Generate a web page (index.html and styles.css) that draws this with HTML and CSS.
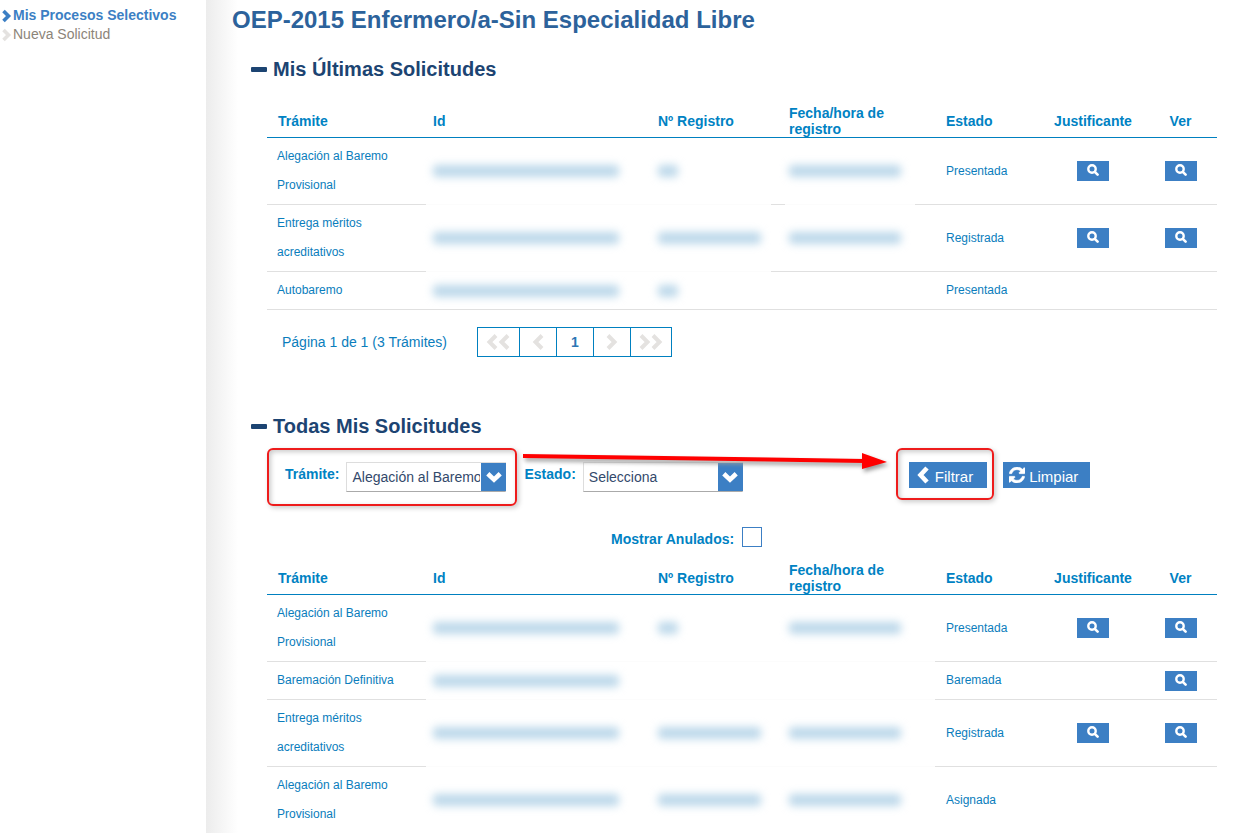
FILE: index.html
```html
<!DOCTYPE html>
<html lang="es">
<head>
<meta charset="utf-8">
<title>Mis Procesos Selectivos</title>
<link rel="stylesheet" href="styles.css">
</head>
<body>
<svg class="sprite" aria-hidden="true">
  <symbol id="chev-right" viewBox="0 0 10 14"><path d="M1.500 2l5 5-5 5" fill="none" stroke="currentColor" stroke-width="3.600"/></symbol>
  <symbol id="chev-left" viewBox="0 0 12 18"><path d="M10 2L3.500 9l6.500 7" fill="none" stroke="currentColor" stroke-width="4.600"/></symbol>
  <symbol id="chev-down" viewBox="0 0 16 12"><path d="M1.800 2.800L8 8.600l6.200-5.800" fill="none" stroke="currentColor" stroke-width="4.600"/></symbol>
  <symbol id="page-prev" viewBox="0 0 12 16"><path d="M10 1.500L3.500 8l6.500 6.500" fill="none" stroke="currentColor" stroke-width="4"/></symbol>
  <symbol id="page-next" viewBox="0 0 12 16"><path d="M2 1.500L8.500 8 2 14.500" fill="none" stroke="currentColor" stroke-width="4"/></symbol>
  <symbol id="lens" viewBox="0 0 12 12"><circle cx="5" cy="5" r="3.700" fill="none" stroke="currentColor" stroke-width="2.400"/><path d="M7.800 7.800l2.800 2.800" stroke="currentColor" stroke-width="2.600" stroke-linecap="round"/></symbol>
  <symbol id="refresh" viewBox="0 0 1536 1536"><path fill="currentColor" stroke="currentColor" stroke-width="50" d="M1511 928q0 5-1 7-64 268-268 434.500T764 1536q-146 0-282.500-55T238 1324l-129 129q-19 19-45 19t-45-19-19-45V960q0-26 19-45t45-19h448q26 0 45 19t19 45-19 45l-137 137q71 66 161 102t187 36q134 0 250-65t186-179q11-17 53-117 8-23 30-23h192q13 0 22.500 9.500T1511 928zm25-800v448q0 26-19 45t-45 19h-448q-26 0-45-19t-19-45 19-45l138-138Q969 256 768 256q-134 0-250 65T332 500q-11 17-53 117-8 23-30 23H50q-13 0-22.500-9.500T18 608v-7q65-268 270-434.500T768 0q146 0 284 55.500T1297 212l130-129q19-19 45-19t45 19 19 45z"/></symbol>
</svg>
<div class="page">
  <nav class="side">
    <a class="side-link active" href="#procesos"><svg class="side-icon"><use href="#chev-right"/></svg>Mis Procesos Selectivos</a>
    <a class="side-link" href="#nueva"><svg class="side-icon"><use href="#chev-right"/></svg>Nueva Solicitud</a>
  </nav>
  <main class="main">
    <h1 class="title">OEP-2015 Enfermero/a-Sin Especialidad Libre</h1>

    <section class="section">
      <h2 class="heading"><span class="minus"></span>Mis Últimas Solicitudes</h2>
      <div class="content">
        <table class="grid partial">
          <colgroup><col class="c-tramite"><col class="c-id"><col class="c-reg"><col class="c-fecha"><col class="c-estado"><col class="c-just"><col class="c-ver"></colgroup>
          <thead><tr><th>Trámite</th><th>Id</th><th>Nº Registro</th><th>Fecha/hora de registro</th><th>Estado</th><th class="mid">Justificante</th><th class="mid">Ver</th></tr></thead>
          <tbody>
            <tr><td>Alegación al Baremo Provisional</td><td class="veil v-id"><span class="smudge w-id"></span></td><td class="veil v-reg"><span class="smudge w-short"></span></td><td class="veil v-fecha"><span class="smudge w-fecha"></span></td><td>Presentada</td><td class="mid"><button class="look" aria-label="Justificante"><svg><use href="#lens"/></svg></button></td><td class="mid"><button class="look" aria-label="Ver"><svg><use href="#lens"/></svg></button></td></tr>
            <tr><td>Entrega méritos acreditativos</td><td class="veil v-id"><span class="smudge w-id"></span></td><td class="veil v-reg"><span class="smudge w-reg"></span></td><td><span class="smudge w-fecha"></span></td><td>Registrada</td><td class="mid"><button class="look" aria-label="Justificante"><svg><use href="#lens"/></svg></button></td><td class="mid"><button class="look" aria-label="Ver"><svg><use href="#lens"/></svg></button></td></tr>
            <tr><td>Autobaremo</td><td><span class="smudge w-id"></span></td><td><span class="smudge w-short"></span></td><td></td><td>Presentada</td><td></td><td></td></tr>
          </tbody>
        </table>
        <div class="pager">
          <span>Página 1 de 1 (3 Trámites)</span>
          <div class="pages">
            <button class="page-btn wide" aria-label="Primera"><svg><use href="#page-prev"/></svg><svg><use href="#page-prev"/></svg></button>
            <button class="page-btn" aria-label="Anterior"><svg><use href="#page-prev"/></svg></button>
            <button class="page-btn current">1</button>
            <button class="page-btn" aria-label="Siguiente"><svg><use href="#page-next"/></svg></button>
            <button class="page-btn wide" aria-label="Última"><svg><use href="#page-next"/></svg><svg><use href="#page-next"/></svg></button>
          </div>
        </div>
      </div>
    </section>

    <section class="section second">
      <h2 class="heading"><span class="minus"></span>Todas Mis Solicitudes</h2>
      <form class="content">
        <div class="filters">
          <div class="field marked mark-field">
            <label for="tramite">Trámite:</label>
            <span class="select"><select id="tramite"><option>Alegación al Baremo Provisional</option></select><span class="select-arrow"><svg><use href="#chev-down"/></svg></span></span>
          </div>
          <div class="field">
            <label for="estado">Estado:</label>
            <span class="select"><select id="estado"><option>Selecciona</option></select><span class="select-arrow"><svg><use href="#chev-down"/></svg></span></span>
          </div>
          <div class="actions">
            <span class="marked mark-btn"><button class="btn btn-filter" type="button"><svg class="i-left"><use href="#chev-left"/></svg>Filtrar</button></span>
            <button class="btn" type="button"><svg class="i-refresh"><use href="#refresh"/></svg>Limpiar</button>
          </div>
          <svg class="arrow" viewBox="0 0 366 24" aria-hidden="true"><path d="M2 7L344 12" stroke="#f00" stroke-width="4"/><path d="M341 4l25 9-25 7z" fill="#f00"/></svg>
        </div>
        <div class="anulados"><label for="anulados">Mostrar Anulados:</label><input id="anulados" type="checkbox"></div>
        <table class="grid">
          <colgroup><col class="c-tramite"><col class="c-id"><col class="c-reg"><col class="c-fecha"><col class="c-estado"><col class="c-just"><col class="c-ver"></colgroup>
          <thead><tr><th>Trámite</th><th>Id</th><th>Nº Registro</th><th>Fecha/hora de registro</th><th>Estado</th><th class="mid">Justificante</th><th class="mid">Ver</th></tr></thead>
          <tbody>
            <tr><td>Alegación al Baremo Provisional</td><td class="veil"><span class="smudge w-id"></span></td><td class="veil"><span class="smudge w-short"></span></td><td class="veil"><span class="smudge w-fecha"></span></td><td>Presentada</td><td class="mid"><button class="look" type="button" aria-label="Justificante"><svg><use href="#lens"/></svg></button></td><td class="mid"><button class="look" type="button" aria-label="Ver"><svg><use href="#lens"/></svg></button></td></tr>
            <tr><td>Baremación Definitiva</td><td class="veil"><span class="smudge w-id"></span></td><td class="veil"></td><td class="veil"></td><td>Baremada</td><td></td><td class="mid"><button class="look" type="button" aria-label="Ver"><svg><use href="#lens"/></svg></button></td></tr>
            <tr><td>Entrega méritos acreditativos</td><td class="veil"><span class="smudge w-id"></span></td><td class="veil"><span class="smudge w-reg"></span></td><td class="veil"><span class="smudge w-fecha"></span></td><td>Registrada</td><td class="mid"><button class="look" type="button" aria-label="Justificante"><svg><use href="#lens"/></svg></button></td><td class="mid"><button class="look" type="button" aria-label="Ver"><svg><use href="#lens"/></svg></button></td></tr>
            <tr><td>Alegación al Baremo Provisional</td><td class="veil"><span class="smudge w-id"></span></td><td class="veil"><span class="smudge w-reg"></span></td><td class="veil"><span class="smudge w-fecha"></span></td><td>Asignada</td><td></td><td></td></tr>
          </tbody>
        </table>
      </form>
    </section>
  </main>
</div>
</body>
</html>
```
FILE: styles.css
```css
* { box-sizing: border-box; }
body {
  margin: 0;
  background: #fff;
  color: #0a7dbc;
  font: 14px/16px "Liberation Sans", Arial, sans-serif;
}
button, select { font-family: inherit; cursor: pointer; }
svg { display: block; }
.sprite { position: absolute; width: 0; height: 0; }

.page { display: flex; min-height: 100vh; }
.side { flex: 0 0 206px; padding: 6px 0 0 2px; }
.side-link {
  display: flex;
  align-items: center;
  gap: 1px;
  line-height: 19px;
  color: #8c8479;
  text-decoration: none;
}
.side-link.active { color: #3c7fc4; font-weight: bold; }
.side-icon { width: 10px; height: 14px; color: #e4e2e0; }
.active .side-icon { color: #3c7fc4; }

.main {
  flex: 1;
  min-width: 0;
  padding: 6px 41px 0 26px;
  background: linear-gradient(to right, #ececec, #fff 32px);
}
.title { margin: 0; color: #2c629b; font-size: 24px; line-height: 28px; }
.section { margin-top: 23px; padding-left: 19px; }
.section.second { margin-top: 57px; }
.heading {
  display: flex;
  align-items: center;
  gap: 6px;
  margin: 0 0 24px;
  color: #1c4472;
  font-size: 20px;
  line-height: 24px;
}
.minus { width: 16px; height: 5px; border-radius: 1px; background: #1c4472; }
.content { padding-left: 16px; }

.grid { width: 100%; table-layout: fixed; border-collapse: separate; border-spacing: 0; }
.c-tramite { width: 155px; }
.c-id { width: 225px; }
.c-reg { width: 131px; }
.c-fecha { width: 157px; }
.c-estado { width: 107px; }
.c-just { width: 102px; }
.c-ver { width: 73px; }
.grid th {
  padding: 0 11px;
  border-bottom: 1px solid #0080c0;
  color: #0082c3;
  text-align: left;
  line-height: 16px;
}
.grid td {
  position: relative;
  padding: 4px 20px 4px 10px;
  border-bottom: 1px solid #e0e0e0;
  font-size: 12px;
  line-height: 29px;
}
.grid td:not(:first-child) { padding-left: 11px; padding-right: 0; }
.grid .mid { padding-left: 0; padding-right: 0; text-align: center; }
.grid td.mid:not(:first-child) { padding-left: 0; }
.veil::after {
  content: "";
  position: absolute;
  left: 0;
  right: -4px;
  bottom: -1px;
  height: 1px;
  background: #fcfcfc;
}
td:nth-child(2).veil::after { left: 4px; }
.v-reg::after { right: 7px; }
.v-fecha::after { left: 7px; right: 20px; }
.smudge {
  display: block;
  height: 12px;
  border-radius: 4px;
  background: #bcd8ea;
  filter: blur(4px);
}
.w-id { width: 186px; }
.w-short { width: 20px; }
.w-reg { width: 103px; }
.w-fecha { width: 112px; }
.look {
  display: flex;
  align-items: center;
  justify-content: center;
  width: 32px;
  height: 20px;
  margin: 0 auto;
  padding: 0 0 2px;
  border: 0;
  background: #3c7fc4;
  color: #fff;
}
.look svg { width: 12px; height: 12px; }

.pager { display: flex; align-items: center; gap: 30px; margin-top: 17px; padding-left: 15px; }
.pages { display: flex; border: 1px solid #0080c0; }
.page-btn {
  display: flex;
  align-items: center;
  justify-content: center;
  width: 37px;
  height: 28px;
  padding: 0;
  border: 0;
  border-left: 1px solid #0080c0;
  background: #fff;
  color: #e4e2e0;
}
.page-btn:first-child { border-left: 0; }
.page-btn.wide { width: 41px; }
.page-btn svg { width: 12px; height: 16px; }
.page-btn.current { color: #2c76b4; font-size: 14px; font-weight: bold; }

.filters { position: relative; display: flex; align-items: flex-start; gap: 18px; padding-left: 18px; }
.field { display: flex; gap: 7px; }
.field label { color: #0082c3; font-weight: bold; line-height: 24px; }
.select { position: relative; display: block; }
.select select {
  width: 160px;
  height: 30px;
  padding: 0 25px 0 5px;
  border: 1px solid #ddd;
  border-bottom-color: #aaa;
  border-radius: 0;
  appearance: none;
  background: #fff;
  color: #33496b;
  font-size: 14px;
  text-overflow: clip;
}
.select-arrow {
  position: absolute;
  top: 1px;
  right: 0;
  display: grid;
  place-items: center;
  width: 25px;
  height: 28px;
  background: #3c7fc4;
  color: #fff;
  pointer-events: none;
}
.select-arrow svg { width: 16px; height: 12px; }
.marked { position: relative; }
.marked::after {
  content: "";
  position: absolute;
  border: 2px solid #ee1c1c;
  border-radius: 6px;
  box-shadow: 2px 2px 5px #ccc, inset 2px 2px 5px #ccc;
  pointer-events: none;
}
.mark-field::after { inset: -14px -11px -14px -18px; }
.mark-btn::after { inset: -14px -7px -12px -13px; }
.actions { display: flex; gap: 16px; margin-left: 148px; }
.btn {
  display: flex;
  align-items: center;
  gap: 4px;
  height: 26px;
  padding: 3px 12px 0 6px;
  border: 0;
  background: #3c7fc4;
  color: #fff;
  font-size: 15px;
}
.btn-filter { gap: 6px; padding-right: 14px; padding-left: 8px; }
.i-left { width: 12px; height: 18px; margin-bottom: 3px; }
.i-refresh { width: 16px; height: 16px; margin-bottom: 3px; }
.arrow {
  position: absolute;
  left: 254px;
  top: -13px;
  width: 366px;
  height: 24px;
  filter: drop-shadow(2px 3px 2px #999);
}
.anulados { display: flex; align-items: center; gap: 8px; margin: 35px 0 15px; padding-left: 344px; }
.anulados label { padding-top: 3px; color: #0082c3; font-weight: bold; }
.anulados input {
  width: 20px;
  height: 20px;
  margin: 0;
  border: 1px solid #3c7fc4;
  appearance: none;
  background: #fff;
}
```
